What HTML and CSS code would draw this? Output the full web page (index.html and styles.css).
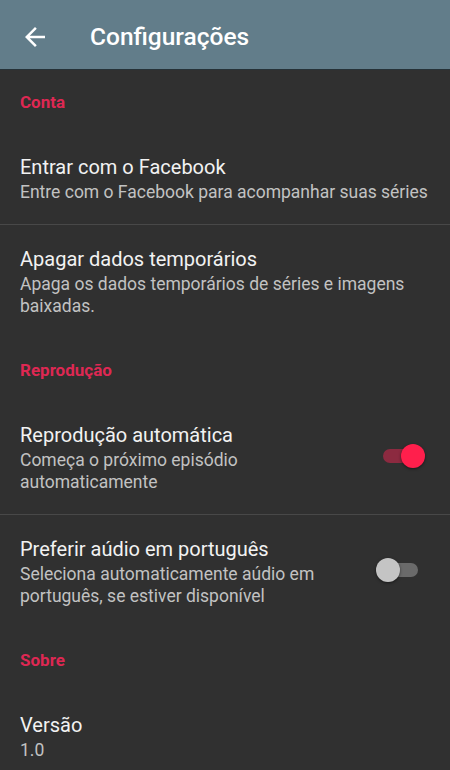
FILE: index.html
```html
<!DOCTYPE html>
<html lang="pt">
<head>
<meta charset="utf-8">
<title>Configurações</title>
<link rel="stylesheet" href="styles.css">
</head>
<body>
<header class="appbar">
  <svg class="back" viewBox="0 0 24 24" width="30" height="30"><path fill="#ffffff" d="M20 11H7.83l5.59-5.59L12 4l-8 8 8 8 1.41-1.41L7.83 13H20v-2z"/></svg>
  <h1 class="appbar-title">Configurações</h1>
</header>
<main class="prefs">
  <div class="category">Conta</div>
  <div class="item">
    <div class="texts">
      <div class="title">Entrar com o Facebook</div>
      <div class="summary">Entre com o Facebook para acompanhar suas séries</div>
    </div>
  </div>
  <div class="divider"></div>
  <div class="item">
    <div class="texts">
      <div class="title">Apagar dados temporários</div>
      <div class="summary">Apaga os dados temporários de séries e imagens baixadas.</div>
    </div>
  </div>
  <div class="category">Reprodução</div>
  <div class="item">
    <div class="texts narrow">
      <div class="title">Reprodução automática</div>
      <div class="summary">Começa o próximo episódio automaticamente</div>
    </div>
    <div class="switch on"><span class="track"></span><span class="thumb"></span></div>
  </div>
  <div class="divider"></div>
  <div class="item">
    <div class="texts narrow">
      <div class="title">Preferir aúdio em português</div>
      <div class="summary">Seleciona automaticamente aúdio em português, se estiver disponível</div>
    </div>
    <div class="switch off"><span class="track"></span><span class="thumb"></span></div>
  </div>
  <div class="category">Sobre</div>
  <div class="item">
    <div class="texts">
      <div class="title">Versão</div>
      <div class="summary">1.0</div>
    </div>
  </div>
</main>
</body>
</html>
```
FILE: styles.css
```css
* { box-sizing: border-box; }
html, body {
  margin: 0;
  padding: 0;
  background: #303030;
  font-family: Roboto, "Noto Sans", sans-serif;
}
body { width: 450px; min-height: 770px; overflow: hidden; }
.appbar {
  height: 70px;
  background: #627d8a;
  display: flex;
  align-items: center;
  padding: 5px 0 0 20px;
  gap: 40px;
  border-bottom: 1px solid #263238;
}
.back { display: block; flex: none; }
.appbar-title {
  margin: 0;
  color: #ffffff;
  font-size: 24.5px;
  font-weight: 500;
  line-height: 30px;
}
.prefs { display: flex; flex-direction: column; }
.category {
  padding: 21px 20px 20px;
  line-height: 22px;
  font-size: 17px;
  font-weight: 700;
  color: #de2853;
}
.item {
  display: flex;
  align-items: center;
  padding: 21px 16px 21px 20px;
}
.texts { flex: 1; min-width: 0; }
.texts.narrow { flex: none; width: 305px; }
.title {
  color: #f2f2f2;
  font-size: 20px;
  line-height: 26px;
}
.summary {
  margin-top: 1px;
  color: #c2c2c2;
  font-size: 17.5px;
  line-height: 22px;
}
.divider { height: 1px; background: #484848; }
.switch {
  position: relative;
  flex: none;
  width: 49px;
  height: 24px;
  margin: -4px 9px 0 auto;
}
.track {
  position: absolute;
  left: 7px;
  top: 5px;
  width: 35px;
  height: 14px;
  border-radius: 7px;
}
.thumb {
  position: absolute;
  top: 0;
  width: 24px;
  height: 24px;
  border-radius: 50%;
  box-shadow: 0 1px 3px rgba(0,0,0,0.5);
}
.switch.on .track { background: #8c2a40; }
.switch.on .thumb { right: 0; background: #ff1f4c; }
.switch.off .track { background: #6a6a6a; }
.switch.off .thumb { left: 0; background: #c4c4c4; }
```
